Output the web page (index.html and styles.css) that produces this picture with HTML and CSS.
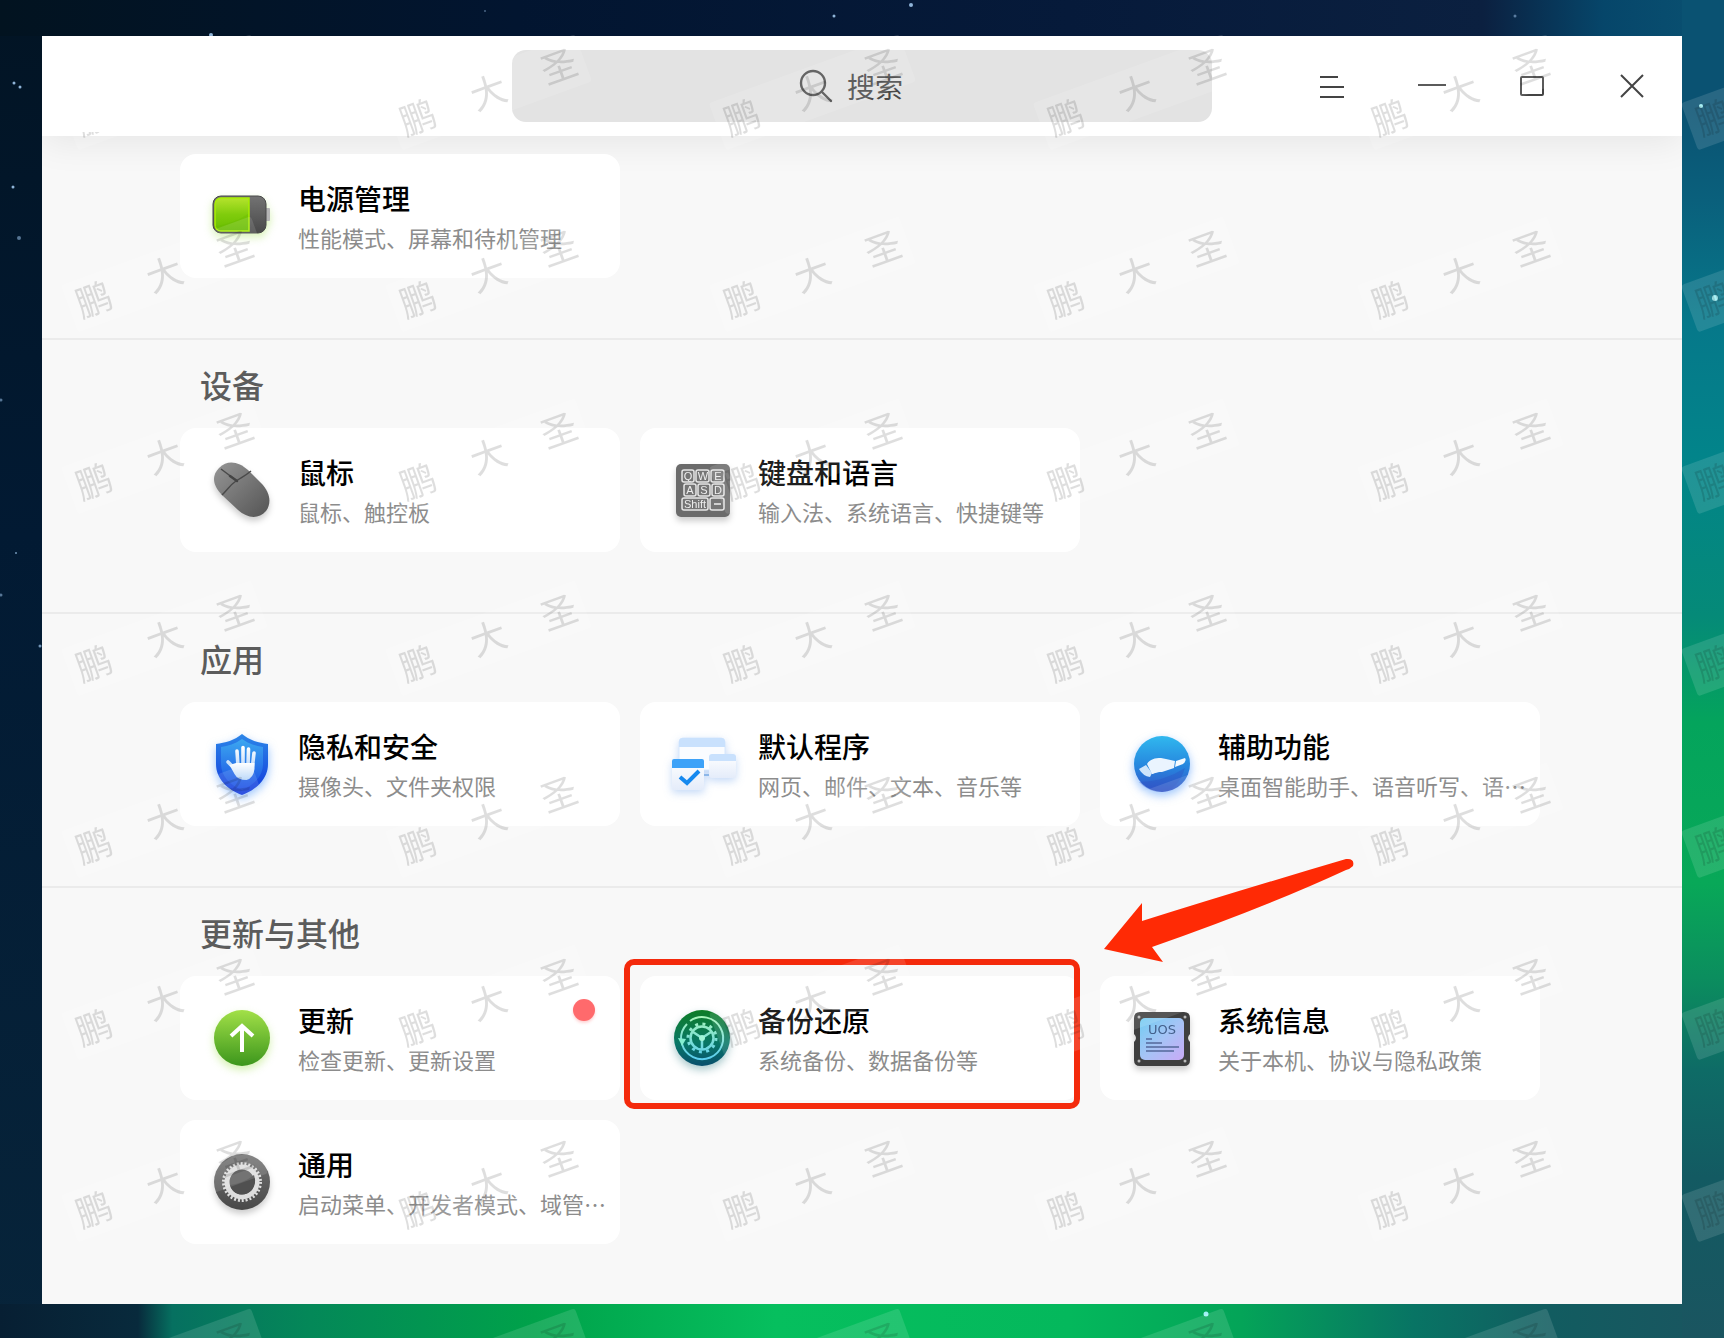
FILE: index.html
```html
<!DOCTYPE html>
<html lang="zh-CN">
<head>
    <meta charset="UTF-8">
    <meta name="viewport" content="width=device-width, initial-scale=1.0">
    <title>控制中心</title>
    <link rel="stylesheet" href="styles.css">
</head>
<body>
    <!-- Stars on the wallpaper -->
    <svg class="stars" aria-hidden="true">
        <g fill="#8fb4d8">
            <circle cx="14" cy="83" r="1.5"/><circle cx="20" cy="87" r="1.5"/>
            <circle cx="13" cy="187" r="1.5"/><circle cx="19" cy="238" r="2" opacity=".6"/>
            <circle cx="211" cy="35" r="2"/><circle cx="485" cy="11" r="1" opacity=".5"/>
            <circle cx="911" cy="5" r="2"/><circle cx="834" cy="16" r="1.5"/>
            <circle cx="1515" cy="16" r="1.5" opacity=".6"/><circle cx="16" cy="553" r="1" opacity=".8"/>
            <circle cx="1" cy="595" r="1.5" opacity=".6"/><circle cx="40" cy="646" r="1.5" opacity=".8"/>
            <circle cx="1" cy="400" r="1.5" opacity=".6"/>
        </g>
        <g fill="#9ff0f5">
            <circle cx="1701" cy="106" r="2"/><circle cx="1715" cy="298" r="3"/>
            <circle cx="1206" cy="1314" r="2.5"/>
        </g>
    </svg>

    <div class="window">
        <header class="titlebar">
            <div class="titlebar-brand"></div>
            <label class="search">
                <svg width="34" height="34" viewBox="0 0 34 34" fill="none" stroke="#505050" stroke-width="2.4" stroke-linecap="round">
                    <circle cx="14" cy="14" r="12"/>
                    <path d="M23 23l9 9"/>
                </svg>
                <input type="text" placeholder="搜索" aria-label="搜索">
            </label>
            <div class="window-controls">
                <button type="button" aria-label="菜单">
                    <svg width="28" height="28" viewBox="0 0 28 28"><path d="M2 5h18M2 15h24M2 25h24"/></svg>
                </button>
                <button type="button" aria-label="最小化">
                    <svg width="28" height="28" viewBox="0 0 28 28"><path d="M0 13h28"/></svg>
                </button>
                <button type="button" aria-label="最大化">
                    <svg width="28" height="28" viewBox="0 0 28 28"><rect x="3" y="5" width="22" height="18" rx="1"/></svg>
                </button>
                <button type="button" aria-label="关闭">
                    <svg width="28" height="28" viewBox="0 0 28 28"><path d="M3 3l22 22M25 3L3 25"/></svg>
                </button>
            </div>
        </header>

        <main>
            <section class="group group-first">
                <div class="cards">
                    <a class="card" href="#power">
                        <svg class="icon glow-green" viewBox="0 0 56 56">
                            <defs>
                                <linearGradient id="batGreen" x1="0" y1="0" x2="0" y2="1"><stop offset="0" stop-color="#b4e32c"/><stop offset=".5" stop-color="#80cc0c"/><stop offset="1" stop-color="#68bd00"/></linearGradient>
                                <linearGradient id="batGrey" x1="0" y1="0" x2="0" y2="1"><stop offset="0" stop-color="#737373"/><stop offset="1" stop-color="#494949"/></linearGradient>
                            </defs>
                            <rect x="50" y="20" width="6" height="13" rx="1" fill="#b5b5b5"/>
                            <rect x="-1" y="8" width="53" height="37" rx="8" fill="url(#batGrey)" stroke="#484848"/>
                            <path d="M35 10V43H7a6 6 0 0 1-6-6V16a6 6 0 0 1 6-6z" fill="url(#batGreen)" stroke="#a8f000" stroke-width="1.5"/>
                            <path d="M1 38q18-2 33-12v16H7q-5 0-6-4z" fill="#5eb300" opacity=".25"/>
                        </svg>
                        <div class="card-text">
                            <h3>电源管理</h3>
                            <p>性能模式、屏幕和待机管理</p>
                        </div>
                    </a>
                </div>
            </section>

            <section class="group">
                <h2>设备</h2>
                <div class="cards">
                    <a class="card" href="#mouse">
                        <svg class="icon glow-grey" viewBox="0 0 56 56">
                            <defs><linearGradient id="mouse" x1="0" y1="0" x2="1" y2="1"><stop offset="0" stop-color="#969696"/><stop offset="1" stop-color="#545454"/></linearGradient></defs>
                            <path d="M5 6C14-3 25 0 34 8l13 13c9 9 11 20 5 28-8 9-19 7-28-1L8 33C-1 24-3 14 5 6z" fill="url(#mouse)"/>
                            <path d="M8 33C14 27 16 23 22 19S31 14 37 9M7 7l16 12" fill="none" stroke="#4a4a4a" stroke-width="1.5"/>
                            <path d="M23 19l-7-5" stroke="#444" stroke-width="2.5" stroke-linecap="round"/>
                        </svg>
                        <div class="card-text">
                            <h3>鼠标</h3>
                            <p>鼠标、触控板</p>
                        </div>
                    </a>
                    <a class="card" href="#keyboard">
                        <svg class="icon glow-grey" viewBox="0 0 56 56">
                            <rect x="2" y="2" width="54" height="53" rx="5" fill="#6b6b6b"/>
                            <g fill="#757575" stroke="#e6e6e6" stroke-width="1.5">
                                <rect x="8" y="8" width="12" height="12" rx="2"/><rect x="22" y="8" width="13" height="12" rx="2"/><rect x="37" y="8" width="13" height="12" rx="2"/>
                                <rect x="10" y="22" width="12" height="12" rx="2"/><rect x="24" y="22" width="12" height="12" rx="2"/><rect x="38" y="22" width="12" height="12" rx="2"/>
                                <rect x="8" y="36" width="26" height="12" rx="2"/><rect x="36" y="36" width="14" height="12" rx="2"/>
                            </g>
                            <g class="keys">
                                <text x="14" y="18">Q</text><text x="29" y="18">W</text><text x="44" y="18">E</text>
                                <text x="16" y="32">A</text><text x="30" y="32">S</text><text x="44" y="32">D</text>
                                <text x="21" y="46">Shift</text>
                            </g>
                            <path d="M40 42h7" stroke="#eee" stroke-width="1.5"/>
                        </svg>
                        <div class="card-text">
                            <h3>键盘和语言</h3>
                            <p>输入法、系统语言、快捷键等</p>
                        </div>
                    </a>
                </div>
            </section>

            <section class="group">
                <h2>应用</h2>
                <div class="cards">
                    <a class="card" href="#privacy">
                        <svg class="icon glow-blue" viewBox="0 0 56 56">
                            <defs>
                                <linearGradient id="shield" x1="0" y1="0" x2="0" y2="1"><stop offset="0" stop-color="#2c86e8"/><stop offset="1" stop-color="#1138dc"/></linearGradient>
                                <linearGradient id="shieldIn" x1="0" y1="0" x2="0" y2="1"><stop offset="0" stop-color="#3ca8f0"/><stop offset="1" stop-color="#1a4ce4"/></linearGradient>
                                <linearGradient id="hand" x1="0" y1="0" x2="0" y2="1"><stop offset="0" stop-color="#ffffff"/><stop offset="1" stop-color="#b4d4f8"/></linearGradient>
                            </defs>
                            <path d="M28-2C35 4 45 7 54 8v20c0 15-12 26-26 31C14 54 2 43 2 28V8c9-1 19-4 26-10z" fill="url(#shield)"/>
                            <path d="M28 3c7 5 14 7 21 8v17c0 12-9 21-21 26C16 49 7 40 7 28V11c7-1 14-3 21-8z" fill="url(#shieldIn)"/>
                            <g fill="none" stroke="url(#hand)" stroke-width="3.6" stroke-linecap="round">
                                <path d="M24 30L23 15M29 30V11.500M34 30L34.500 13M38.500 30L40 17M22 34L14 26"/>
                            </g>
                            <path d="M22 27h18.500v6q-1 9-8 11-9 0-12-6l-5-9z" fill="url(#hand)"/>
                        </svg>
                        <div class="card-text">
                            <h3>隐私和安全</h3>
                            <p>摄像头、文件夹权限</p>
                        </div>
                    </a>
                    <a class="card" href="#default-apps">
                        <svg class="icon glow-pale" viewBox="0 0 56 56">
                            <defs><linearGradient id="sheet" x1="0" y1="0" x2="0" y2="1"><stop offset="0" stop-color="#ffffff"/><stop offset="1" stop-color="#e4ecfa"/></linearGradient></defs>
                            <path d="M36 39H24" stroke="#8db7e8" stroke-width="2"/>
                            <rect x="5" y="2" width="46" height="32" rx="4" fill="#fafcff" stroke="#d8e8fc"/>
                            <path d="M9 2h38a4 4 0 0 1 4 4v5H5V6a4 4 0 0 1 4-4z" fill="#c9e1fd"/>
                            <rect x="35" y="18" width="27" height="24" rx="3" fill="url(#sheet)"/>
                            <path d="M38 18h21a3 3 0 0 1 3 3v4H35v-4a3 3 0 0 1 3-3z" fill="#c9e1fd"/>
                            <rect x="-2" y="23" width="32" height="31" rx="2" fill="url(#sheet)"/>
                            <path d="M-2 32v-7q0-2 2-2h28q2 0 2 2v7z" fill="#3da2f8"/>
                            <path d="M6 41l7 6 12-12" fill="none" stroke="#1689ef" stroke-width="4"/>
                        </svg>
                        <div class="card-text">
                            <h3>默认程序</h3>
                            <p>网页、邮件、文本、音乐等</p>
                        </div>
                    </a>
                    <a class="card" href="#accessibility">
                        <svg class="icon glow-blue" viewBox="0 0 56 56">
                            <defs><linearGradient id="assist" x1="0" y1="0" x2="0" y2="1"><stop offset="0" stop-color="#30b8ee"/><stop offset=".55" stop-color="#2685de"/><stop offset="1" stop-color="#3556c8"/></linearGradient></defs>
                            <circle cx="28" cy="28" r="28" fill="url(#assist)"/>
                            <path d="M5 46q24 0 46-14-7 22-23 24-14 0-23-10z" fill="#2a51c4" opacity=".35"/>
                            <path d="M5 33l7-4 6 8-2 4q-7-1-11-8z" fill="#cfe5fb"/>
                            <path d="M13 28c3-5 8-6 14-6l5 1 9 2-1 7-12 4c-6 0-8 2-10 2z" fill="#eaf4fe"/>
                            <path d="M42 25l9-3q2 2-2 6l-8 3z" fill="#f4faff"/>
                        </svg>
                        <div class="card-text">
                            <h3>辅助功能</h3>
                            <p>桌面智能助手、语音听写、语…</p>
                        </div>
                    </a>
                </div>
            </section>

            <section class="group">
                <h2>更新与其他</h2>
                <div class="cards">
                    <a class="card" href="#update">
                        <svg class="icon glow-green" viewBox="0 0 56 56">
                            <defs><linearGradient id="update" x1="0" y1="0" x2="0" y2="1"><stop offset="0" stop-color="#a2e048"/><stop offset="1" stop-color="#3c961c"/></linearGradient></defs>
                            <circle cx="28" cy="28" r="28" fill="url(#update)"/>
                            <path d="M28 42V16M17 26l11-10 11 10" fill="none" stroke="#fff" stroke-width="4"/>
                        </svg>
                        <div class="card-text">
                            <h3>更新</h3>
                            <p>检查更新、更新设置</p>
                        </div>
                        <span class="badge"></span>
                    </a>
                    <a class="card" href="#backup">
                        <svg class="icon glow-teal" viewBox="0 0 56 56">
                            <defs>
                                <linearGradient id="backup" x1="0" y1="0" x2="0" y2="1"><stop offset="0" stop-color="#0e7d26"/><stop offset=".6" stop-color="#087768"/><stop offset="1" stop-color="#084e6c"/></linearGradient>
                                <linearGradient id="backupLine" gradientUnits="userSpaceOnUse" x1="0" y1="6" x2="0" y2="50"><stop offset="0" stop-color="#a8f5b8"/><stop offset="1" stop-color="#58cdf0"/></linearGradient>
                            </defs>
                            <circle cx="28" cy="28" r="28" fill="url(#backup)"/>
                            <g fill="none" stroke="url(#backupLine)">
                                <path d="M8 34A21 21 0 1 0 16 11" stroke-width="2"/>
                                <path d="M7 30A21 21 0 0 1 13 14" stroke-width="2"/>
                                <circle cx="28" cy="28" r="11.5" stroke-width="2.5"/>
                                <circle cx="28" cy="28" r="14" stroke-width="3" stroke-dasharray="3 4.33"/>
                                <path d="M28 28v11M28 28l-9-6M28 28l9-6" stroke-width="2.5"/>
                            </g>
                            <path d="M4 28l8 1-4 7z" fill="#84eed0"/>
                            <circle cx="28" cy="28" r="3" fill="#a0f5d8"/>
                        </svg>
                        <div class="card-text">
                            <h3>备份还原</h3>
                            <p>系统备份、数据备份等</p>
                        </div>
                        <!-- Callout frame and arrow -->
                        <span class="callout-frame"></span>
                        <svg class="callout-arrow" width="252" height="108" viewBox="0 0 252 108" aria-hidden="true">
                            <path d="M0 91L38 45V63Q130 34 242 1q9-1 7 7-3 3-7 4Q160 50 48 89l11 15z" fill="#ff2a05"/>
                        </svg>
                    </a>
                    <a class="card" href="#about">
                        <svg class="icon glow-grey" viewBox="0 0 56 56">
                            <defs><linearGradient id="about" x1="0" y1="0" x2="1" y2="1"><stop offset="0" stop-color="#72cdf2"/><stop offset=".5" stop-color="#a5c4f6"/><stop offset="1" stop-color="#c9aaf6"/></linearGradient></defs>
                            <path d="M6 2h44q6 0 6 6v16q-4 4 0 8v18q0 6-6 6H6q-6 0-6-6V32q4-4 0-8V8q0-6 6-6z" fill="#3f3f3f"/>
                            <g fill="#bbb"><circle cx="5" cy="7" r="1.5"/><circle cx="51" cy="7" r="1.5"/><circle cx="5" cy="51" r="1.5"/><circle cx="51" cy="51" r="1.5"/></g>
                            <rect x="6" y="8" width="44" height="42" rx="5" fill="url(#about)"/>
                            <text class="uos" x="28" y="24">UOS</text>
                            <path d="M12 29h6M12 33h16M12 37h33M12 41h28" stroke="#54689a" stroke-width="1.5"/>
                        </svg>
                        <div class="card-text">
                            <h3>系统信息</h3>
                            <p>关于本机、协议与隐私政策</p>
                        </div>
                    </a>
                    <a class="card" href="#general">
                        <svg class="icon glow-grey" viewBox="0 0 56 56">
                            <defs><linearGradient id="general" x1="0" y1="0" x2="0" y2="1"><stop offset="0" stop-color="#757575"/><stop offset="1" stop-color="#484848"/></linearGradient></defs>
                            <circle cx="28" cy="28" r="28" fill="url(#general)"/>
                            <circle cx="28" cy="28" r="15" fill="#606060" stroke="#dedede" stroke-width="5"/>
                            <circle cx="28" cy="28" r="18.5" fill="none" stroke="#dedede" stroke-width="3" stroke-dasharray="2 1.875"/>
                            <path d="M16 31q14-2 24-10 3 8-2 15-6 6-14 4-6-2-8-9z" fill="#505050"/>
                        </svg>
                        <div class="card-text">
                            <h3>通用</h3>
                            <p>启动菜单、开发者模式、域管…</p>
                        </div>
                    </a>
                </div>
            </section>
        </main>
    </div>

    <!-- Watermark tiled over the whole desktop -->
    <svg class="watermark" aria-hidden="true">
        <defs>
            <pattern id="mark" x="0" y="8" width="324" height="182" patternUnits="userSpaceOnUse">
                <g transform="translate(94 110) rotate(-20)">
                    <rect x="-26" y="-25" width="202" height="50" rx="3" fill="#fff" fill-opacity=".12"/>
                    <text x="0 75 150" y="13">鹏大圣</text>
                </g>
            </pattern>
        </defs>
        <rect width="100%" height="100%" fill="url(#mark)"/>
    </svg>
</body>
</html>
```

FILE: styles.css
```css
:root {
    --color-window: #f8f8f8;
    --color-card: #ffffff;
    --color-line: #ebebeb;
    --color-title: #000000;
    --color-muted: #8c8c8c;
    --color-heading: #5c5c5c;
    --color-callout: #f42a0c;
}

* {
    box-sizing: border-box;
}

body {
    margin: 0;
    padding: 36px 42px 34px;
    min-height: 100vh;
    position: relative;
    font-family: "Noto Sans CJK SC", sans-serif;
    /* aurora wallpaper: right edge, bottom edge, top edge, then the night sky */
    background:
        linear-gradient(to bottom, #0a5272 0%, #0a5272 8%, #0a607c 15%, #06788a 24%, #02848a 34%, #058a78 46%, #04a45c 54%, #08a858 66%, #0b8e5e 73%, #0e6b66 80%, #135a62 88%, #1a5560 100%) right top / 42px 100% no-repeat,
        linear-gradient(to right, #071f33 0%, #082a3c 8%, #067060 10%, #048858 18%, #00a24a 31%, #06bf5e 45%, #04b85c 62%, #04a458 72%, #087464 82%, #125c60 90%, #1a5560 100%) left bottom / 100% 34px no-repeat,
        linear-gradient(to right, #021320 0%, #021530 30%, #061a3a 62%, #0b2040 86%, #06466a 93%, #0a5272 100%) left top / 100% 36px no-repeat,
        linear-gradient(to bottom, #021424 0%, #021a33 40%, #07243a 100%);
}

.stars,
.watermark {
    position: absolute;
    top: 0;
    left: 0;
    width: 100%;
    height: 100%;
    pointer-events: none;
}

.watermark {
    z-index: 5;
}

.watermark text {
    font-size: 36px;
    text-anchor: middle;
    fill: #000;
    fill-opacity: 0.13;
}

.window {
    position: relative;
    min-height: calc(100vh - 70px);
    background: var(--color-window);
    overflow: hidden;
}

.titlebar {
    display: grid;
    grid-template-columns: 1fr minmax(0, 700px) 1fr;
    align-items: center;
    height: 100px;
    background: #fff;
    position: relative;
    box-shadow: 0 6px 36px rgba(0, 0, 0, 0.08);
}

/* blank plate, stays clear of the watermark */
.titlebar-brand {
    position: relative;
    z-index: 6;
    width: 220px;
    height: 96px;
    align-self: start;
    background: #fff;
}

.search {
    display: flex;
    justify-content: center;
    align-items: center;
    gap: 14px;
    height: 72px;
    padding-right: 20px;
    border-radius: 14px;
    background: #e3e3e3;
}

.search input {
    width: 58px;
    height: 40px;
    padding: 0;
    border: none;
    outline: none;
    background: transparent;
    font-family: inherit;
    font-size: 28px;
    color: #444;
}

.search input::placeholder {
    color: #484848;
    opacity: 1;
}

.window-controls {
    display: flex;
    justify-content: flex-end;
}

.window-controls button {
    display: flex;
    justify-content: center;
    align-items: center;
    width: 100px;
    height: 100px;
    padding: 0;
    border: none;
    background: transparent;
}

.window-controls svg {
    fill: none;
    stroke: #444;
    stroke-width: 2;
}

.group {
    padding: 20px 142px 60px 138px;
    border-bottom: 2px solid var(--color-line);
}

.group:last-child {
    border-bottom: none;
}

.group-first {
    padding-top: 18px;
}

.group h2 {
    margin: 0 0 20px 20px;
    font-size: 32px;
    line-height: 48px;
    font-weight: 500;
    color: var(--color-heading);
}

.cards {
    display: grid;
    grid-template-columns: repeat(3, 1fr);
    gap: 20px;
}

.card {
    position: relative;
    display: flex;
    align-items: center;
    gap: 28px;
    height: 124px;
    padding: 0 14px 0 34px;
    border-radius: 16px;
    background: var(--color-card);
    text-decoration: none;
}

.icon {
    flex: none;
    width: 56px;
    height: 56px;
    overflow: visible;
}

.glow-green { filter: drop-shadow(0 4px 4px rgba(150, 220, 60, 0.4)); }
.glow-grey { filter: drop-shadow(0 4px 3px rgba(0, 0, 0, 0.2)); }
.glow-blue { filter: drop-shadow(0 4px 5px rgba(40, 130, 250, 0.5)); }
.glow-pale { filter: drop-shadow(0 3px 4px rgba(60, 130, 230, 0.3)); }
.glow-teal { filter: drop-shadow(0 4px 4px rgba(10, 100, 110, 0.35)); }

.keys text {
    font-family: "Liberation Sans", sans-serif;
    font-size: 11px;
    text-anchor: middle;
    fill: #eee;
}

.uos {
    font-family: "DejaVu Sans", sans-serif;
    font-size: 13px;
    text-anchor: middle;
    fill: #44608c;
}

.card-text {
    min-width: 0;
    padding-top: 2px;
}

.card h3,
.card p {
    margin: 0;
    white-space: nowrap;
}

.card h3 {
    font-size: 28px;
    line-height: 40px;
    font-weight: 500;
    color: var(--color-title);
}

.card p {
    font-size: 22px;
    line-height: 38px;
    color: var(--color-muted);
}

.badge {
    position: absolute;
    top: 23px;
    right: 25px;
    width: 22px;
    height: 22px;
    border-radius: 50%;
    background: #ff6a6c;
    box-shadow: 0 2px 3px rgba(255, 106, 108, 0.3);
}

/* Callout around the backup card */
.callout-frame {
    position: absolute;
    inset: -17px 0 -9px -16px;
    border: 6px solid var(--color-callout);
    border-radius: 10px;
}

.callout-arrow {
    position: absolute;
    top: -118px;
    left: 464px;
    z-index: 1;
}
```
